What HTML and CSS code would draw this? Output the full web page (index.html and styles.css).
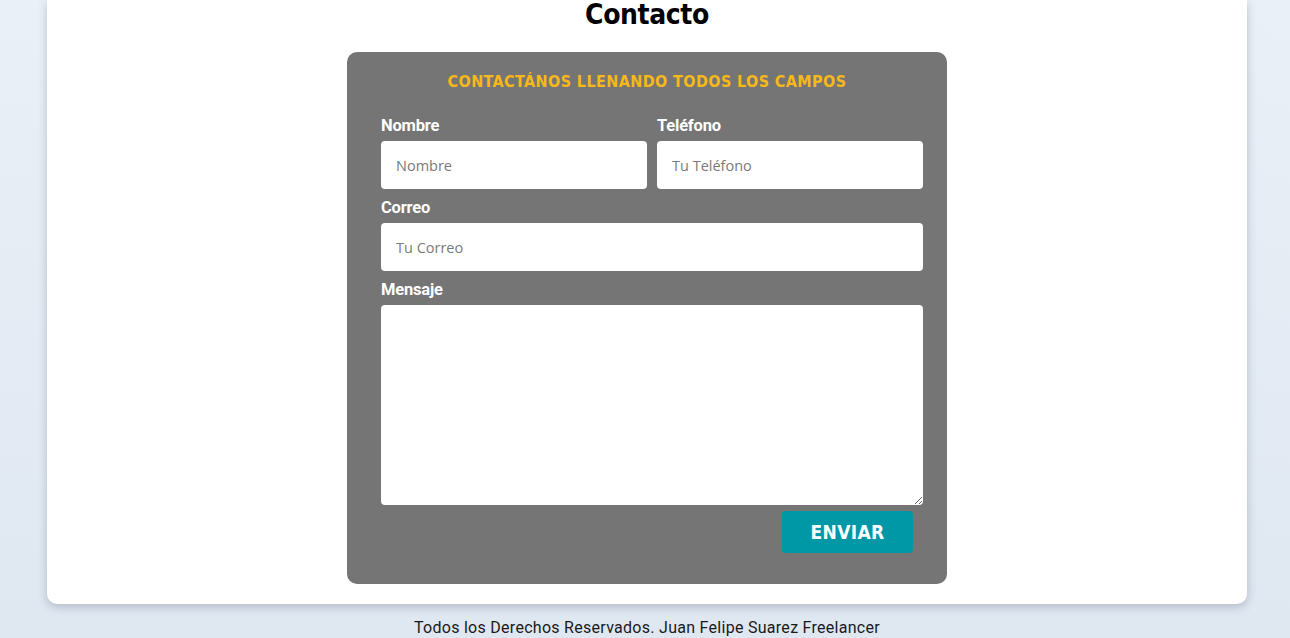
FILE: index.html
```html
<!DOCTYPE html>
<html lang="es">
<head>
<meta charset="utf-8">
<title>Contacto</title>
<link rel="stylesheet" href="styles.css">
</head>
<body>
<main class="card">
  <h2 class="title">Contacto</h2>
  <form class="form-box">
    <h3 class="form-heading">CONTACTÁNOS LLENANDO TODOS LOS CAMPOS</h3>
    <div class="row">
      <div class="field">
        <label class="label">Nombre</label>
        <input class="input" type="text" placeholder="Nombre">
      </div>
      <div class="field">
        <label class="label">Teléfono</label>
        <input class="input" type="tel" placeholder="Tu Teléfono">
      </div>
    </div>
    <div class="field">
      <label class="label">Correo</label>
      <input class="input" type="email" placeholder="Tu Correo">
    </div>
    <div class="field">
      <label class="label">Mensaje</label>
      <textarea class="textarea"></textarea>
    </div>
    <div class="actions">
      <button class="btn" type="button">ENVIAR</button>
    </div>
  </form>
</main>
<footer class="footer">Todos los Derechos Reservados. Juan Felipe Suarez Freelancer</footer>
</body>
</html>
```
FILE: styles.css
```css
* { box-sizing: border-box; }
html, body { margin: 0; padding: 0; }
body {
  background: linear-gradient(180deg, #eaf0f7 0%, #dfe7f1 100%);
  min-height: 638px;
  padding-left: 4px;
  font-family: Roboto, "Liberation Sans", sans-serif;
  color: #111;
}
.card {
  width: 1200px;
  margin: 0 auto;
  background: #fff;
  border-radius: 0 0 10px 10px;
  box-shadow: 0 3px 10px rgba(60, 70, 90, 0.28);
  padding: 2px 0 20px;
  display: flex;
  flex-direction: column;
  align-items: center;
}
.title {
  margin: 0;
  font-family: "DejaVu Sans Condensed", "DejaVu Sans", sans-serif;
  font-weight: bold;
  font-size: 28px;
  line-height: 26px;
  color: #000;
  letter-spacing: -0.4px;
}
.form-box {
  margin-top: 24px;
  width: 600px;
  background: #757575;
  border-radius: 10px;
  padding: 20px 24px 31px 34px;
  display: flex;
  flex-direction: column;
  gap: 9px;
}
.form-heading {
  margin: 0 0 15px -10px;
  text-align: center;
  color: #f7b819;
  font-family: "DejaVu Sans Condensed", "DejaVu Sans", sans-serif;
  font-weight: bold;
  font-size: 16px;
  line-height: 20px;
  letter-spacing: 0.4px;
}
.row {
  display: grid;
  grid-template-columns: 1fr 1fr;
  gap: 10px;
}
.field {
  display: flex;
  flex-direction: column;
}
.label {
  color: #fff;
  font-weight: bold;
  font-size: 16.5px;
  line-height: 20px;
  margin-bottom: 5px;
  letter-spacing: -0.2px;
}
.input, .textarea {
  width: 100%;
  border: none;
  outline: none;
  background: #fff;
  border-radius: 4px;
  font-family: "Open Sans", Roboto, sans-serif;
  font-size: 14.5px;
  color: #333;
}
.input {
  height: 48px;
  padding: 0 15px;
}
.input::placeholder { color: #7a7a7a; }
.textarea {
  height: 200px;
  padding: 10px 15px;
  resize: vertical;
  display: block;
}
.actions {
  display: flex;
  justify-content: flex-end;
  padding-right: 10px;
  margin-top: -3px;
}
.btn {
  width: 131px;
  height: 42px;
  border: none;
  border-radius: 4px;
  background: #0097a7;
  color: #fff;
  font-family: "DejaVu Sans Condensed", "DejaVu Sans", sans-serif;
  font-weight: bold;
  font-size: 19px;
  letter-spacing: 0.3px;
}
.footer {
  text-align: center;
  font-size: 16px;
  line-height: 20px;
  padding-top: 14px;
  letter-spacing: 0.28px;
  color: #1a1a1a;
}
```
